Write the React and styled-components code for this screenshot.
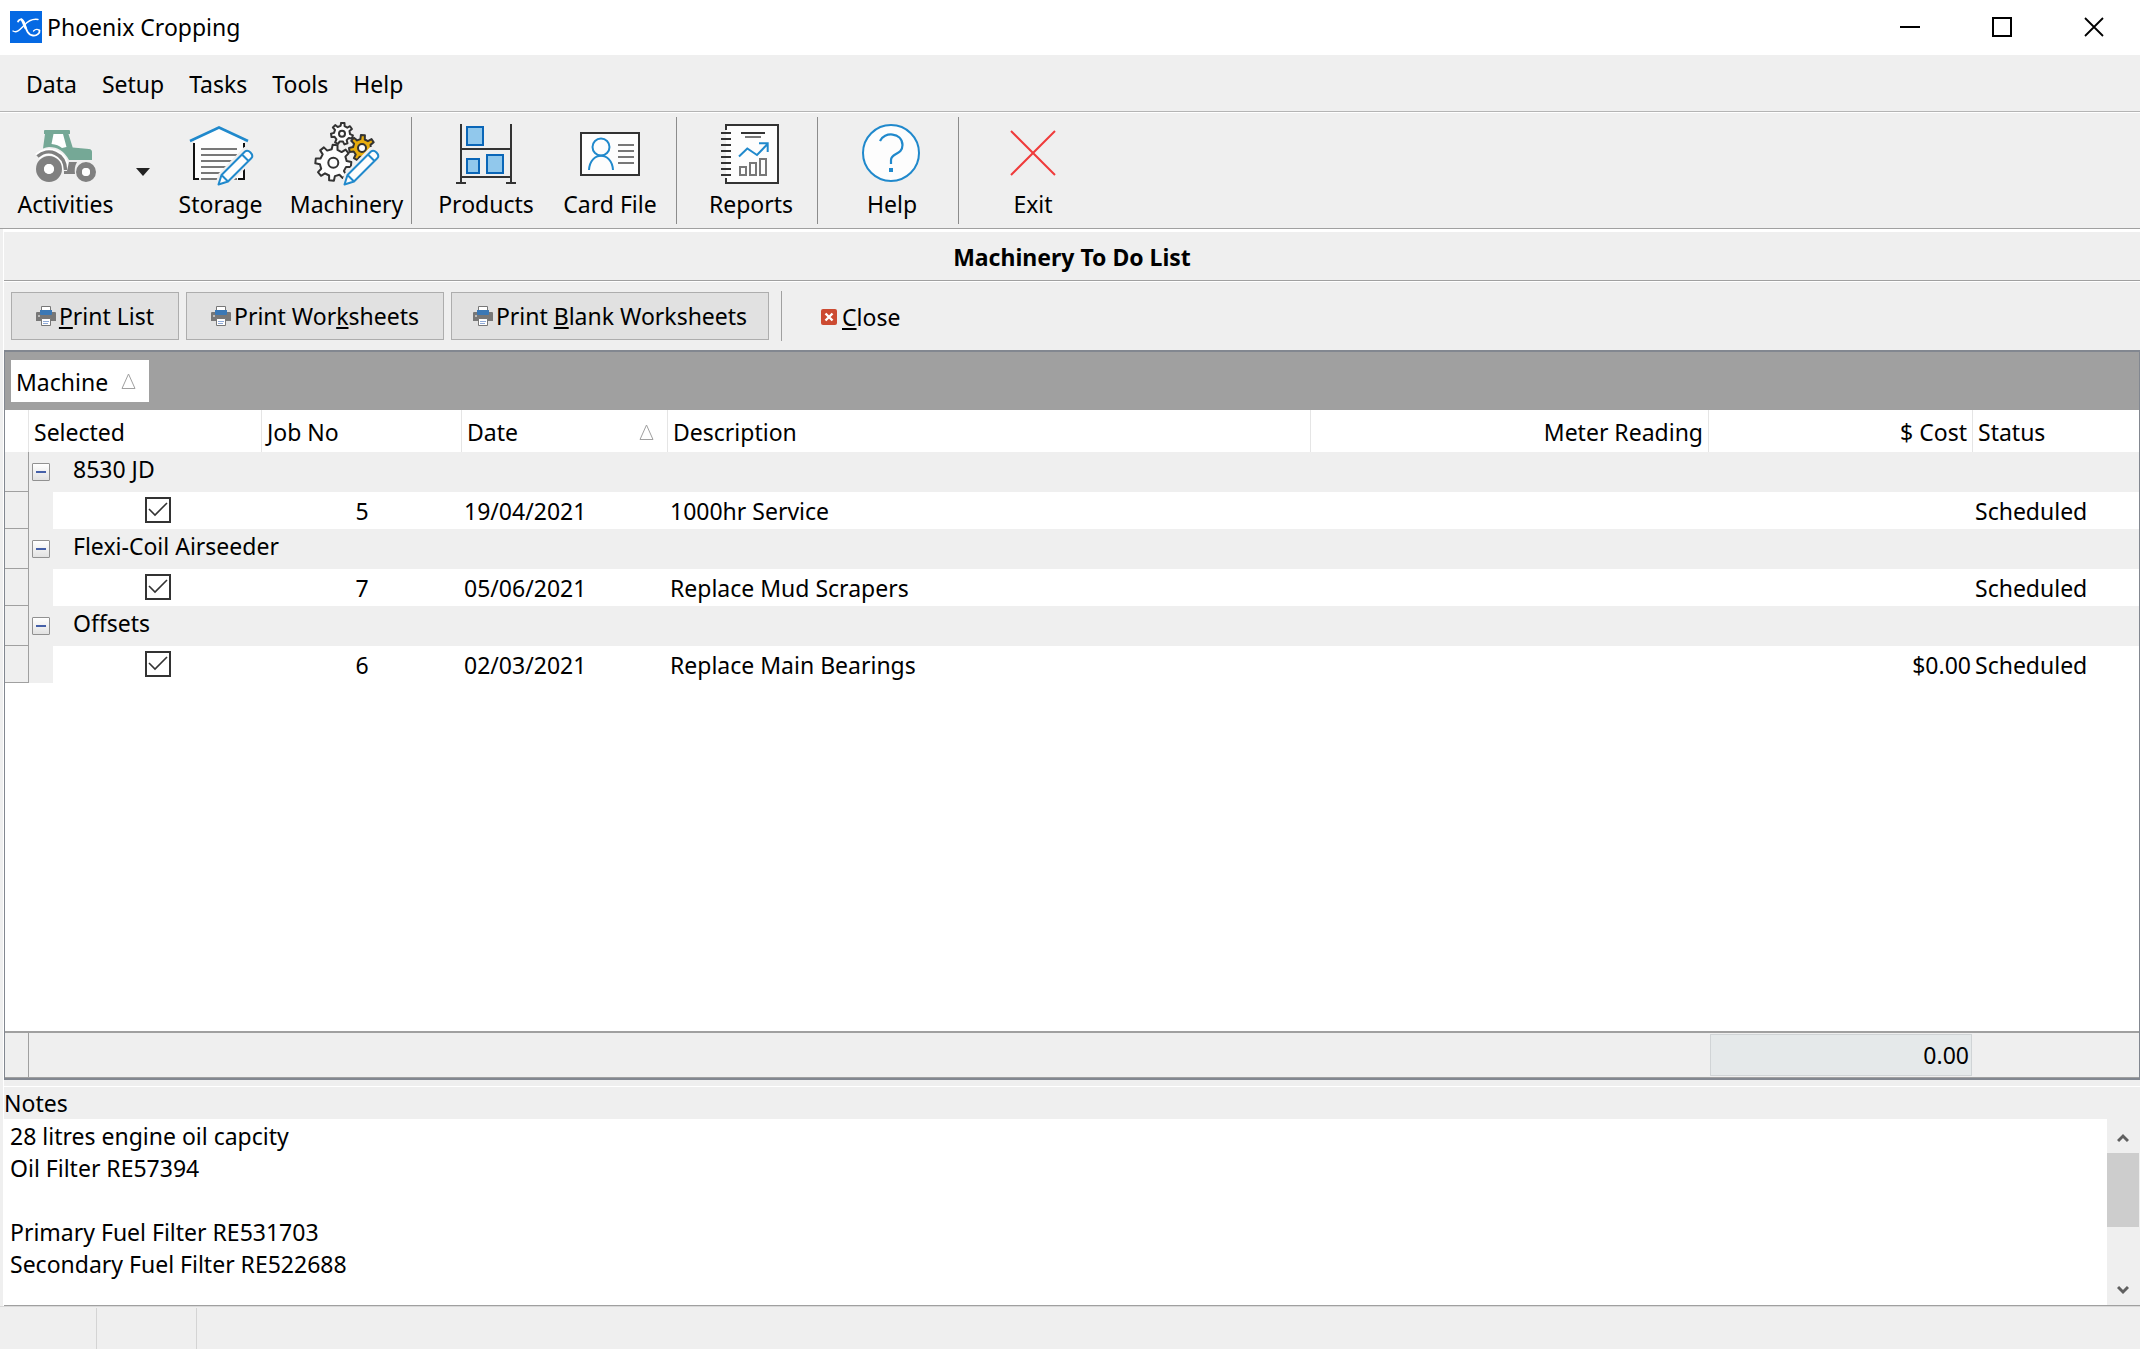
import React, { useState } from "react";
import styled, { createGlobalStyle } from "styled-components";

const GlobalStyle = createGlobalStyle`
  * {
    box-sizing: border-box;
  }
  body {
    margin: 0;
    background: #efefef;
  }
  body, button, input, textarea {
    font-family: "Noto Sans", "Open Sans", sans-serif;
    font-size: 23px;
    line-height: 32px;
    color: #000;
  }
  button {
    border: 0;
    padding: 0;
    background: none;
  }
  svg {
    display: block;
    flex: none;
  }
`;

const Window = styled.div`
  display: flex;
  flex-direction: column;
  min-height: 100vh;
`;

const TitleBar = styled.header`
  display: flex;
  align-items: center;
  gap: 5px;
  height: 55px;
  padding: 0 0 2px 10px;
  background: #fff;
`;

const AppName = styled.span`
  flex: 1;
`;

const WindowButtons = styled.div`
  display: flex;
  align-self: stretch;
`;

const WindowButton = styled.button`
  display: flex;
  align-items: center;
  justify-content: center;
  width: 92px;
`;

const MenuBar = styled.nav`
  display: flex;
  align-items: center;
  gap: 25px;
  height: 57px;
  padding: 2px 0 0 26px;
  border-bottom: 1px solid #b4b4b4;
`;

const ToolBar = styled.div`
  display: flex;
  height: 117px;
  padding-top: 4px;
  border-top: 1px solid #fff;
  border-bottom: 1px solid #a0a0a0;
`;

const ToolButton = styled.button`
  display: flex;
  flex-direction: column;
  align-items: center;
  width: ${(props) => props.$width || 124}px;
  padding-top: 5px;
`;

const DropButton = styled.button`
  display: flex;
  align-items: center;
  justify-content: center;
  width: 24px;
  padding-bottom: 2px;
`;

const ToolSeparator = styled.div`
  width: 1px;
  height: 107px;
  margin: 0 12px 0 4px;
  background: #8c8c8c;
`;

const Workspace = styled.main`
  flex: 1;
  display: flex;
  flex-direction: column;
  margin-left: 3px;
  border-top: 3px solid #fff;
  border-left: 1px solid #fff;
`;

const PageTitle = styled.h1`
  margin: 0;
  height: 49px;
  padding-top: 9px;
  border-bottom: 1px solid #a0a0a0;
  font-size: 23px;
  font-weight: 700;
  text-align: center;
`;

const ActionBar = styled.div`
  display: flex;
  align-items: center;
  height: 69px;
  padding: 0 7px;
  border-top: 1px solid #fff;
`;

const ActionButton = styled.button`
  display: flex;
  align-items: center;
  justify-content: center;
  gap: 3px;
  width: ${(props) => props.$width}px;
  height: 48px;
  margin-right: 7px;
  border: 1px solid #adadad;
  background: #e1e1e1;
  white-space: nowrap;
`;

const ActionSeparator = styled.div`
  width: 1px;
  height: 50px;
  margin: 0 39px 0 5px;
  background: #a0a0a0;
`;

const CloseButton = styled.button`
  display: flex;
  align-items: center;
  gap: 5px;
  padding-top: 1px;
`;

const Grid = styled.section`
  flex: 1;
  display: flex;
  flex-direction: column;
  border: 1px solid #828790;
  border-top: 2px solid #828790;
  border-bottom: 2px solid #828790;
  background: #fff;
`;

const GroupPanel = styled.div`
  display: flex;
  align-items: center;
  height: 58px;
  padding-left: 6px;
  background: #a0a0a0;
`;

const GroupChip = styled.button`
  display: flex;
  align-items: center;
  justify-content: space-between;
  width: 138px;
  height: 42px;
  padding: 1px 13px 0 5px;
  background: #fff;
`;

const Table = styled.table`
  width: 100%;
  table-layout: fixed;
  border-collapse: separate;
  border-spacing: 0;
`;

const HeadCell = styled.th`
  height: 42px;
  padding: 2px 5px 0;
  border-right: 1px solid #e5e5e5;
  font-weight: 400;
  text-align: ${(props) => props.$align || "left"};
  white-space: nowrap;
  &:last-child {
    border-right: 0;
  }
`;

const HeadContent = styled.span`
  display: flex;
  align-items: center;
  justify-content: space-between;
  padding-right: 8px;
`;

const Indicator = styled.td`
  padding: 0;
  border-right: 1px solid #a0a0a0;
  border-bottom: 1px solid #a0a0a0;
  background: #efefef;
`;

const GroupCell = styled.td`
  height: 40px;
  padding: 0 0 6px 3px;
  background: #efefef;
`;

const GroupContent = styled.div`
  display: flex;
  align-items: center;
  gap: 23px;
`;

const Toggle = styled.button`
  display: flex;
  align-items: center;
  justify-content: center;
  width: 18px;
  height: 18px;
  margin-top: 6px;
  border: 1px solid #919191;
  border-radius: 1px;
  background: linear-gradient(#fff, #e2e2e2);
`;

const CheckCell = styled.td`
  padding: 0;
  border-left: 24px solid #efefef;
`;

const CheckBox = styled.input`
  appearance: none;
  display: block;
  width: 26px;
  height: 26px;
  margin: 0 auto 2px;
  border: 2px solid #333;
  background: #fff;
  &:checked {
    background: #fff
      url("data:image/svg+xml,%3Csvg xmlns='http://www.w3.org/2000/svg' viewBox='0 0 22 22'%3E%3Cpath d='M2 10l6 6L20 4' fill='none' stroke='%23333' stroke-width='1.6'/%3E%3C/svg%3E");
  }
`;

const Cell = styled.td`
  height: 37px;
  padding: 1px 2px 0;
  line-height: 34px;
  text-align: ${(props) => props.$align || "left"};
  white-space: nowrap;
`;

const Summary = styled.div`
  display: flex;
  height: 47px;
  margin-top: auto;
  border-top: 2px solid #a0a0a0;
  border-bottom: 1px solid #a0a0a0;
  background: #efefef;
`;

const SummaryIndicator = styled.div`
  width: 24px;
  border-right: 1px solid #a0a0a0;
`;

const SummaryTotal = styled.output`
  width: 262px;
  margin: 1px 167px 1px auto;
  padding: 4px 2px;
  border: 1px solid #d0d4d6;
  background: #e5e9ea;
  text-align: right;
`;

const NotesLabel = styled.label`
  height: 33px;
  margin-top: 6px;
  border-top: 1px solid #fff;
`;

const NotesBox = styled.div`
  display: flex;
  height: 187px;
  border-bottom: 1px solid #a0a0a0;
`;

const NotesText = styled.textarea`
  flex: 1;
  padding: 1px 6px;
  border: 0;
  outline: 0;
  resize: none;
  overflow: hidden;
  background: #fff;
`;

const ScrollBar = styled.div`
  display: flex;
  flex-direction: column;
  width: 33px;
  padding-right: 1px;
`;

const ScrollButton = styled.button`
  display: flex;
  align-items: center;
  justify-content: center;
  height: 34px;
  padding-top: 3px;
`;

const ScrollTrack = styled.div`
  flex: 1;
`;

const ScrollThumb = styled.div`
  height: 74px;
  background: #cdcdcd;
`;

const StatusBar = styled.footer`
  display: flex;
  height: 43px;
  padding-top: 1px;
  border-top: 1px solid #d9d9d9;
`;

const StatusPanel = styled.div`
  width: ${(props) => props.$width}px;
  border-right: 1px solid #d4d4d4;
`;

const ToolIcon = ({ children }) => (
  <svg width="66" height="66" viewBox="0 0 66 66" fill="none" aria-hidden="true">
    {children}
  </svg>
);

// outline of a cog wheel
const gearPath = (cx, cy, outer, inner, teeth, turn = 0) => {
  const step = (Math.PI * 2) / teeth;
  const points = [];
  for (let i = 0; i < teeth; i++) {
    const a = i * step + turn;
    [
      [inner, -0.28],
      [outer, -0.17],
      [outer, 0.17],
      [inner, 0.28],
    ].forEach(([r, k]) => {
      const x = cx + r * Math.cos(a + k * step);
      const y = cy + r * Math.sin(a + k * step);
      points.push(`${x.toFixed(1)} ${y.toFixed(1)}`);
    });
  }
  return `M${points.join("L")}Z`;
};

const Pencil = () => (
  <>
    <path d="M29 65L32 53L57 27Q61 26 65 32V36L40 61Z" fill="#efefef" stroke="#efefef" strokeWidth="4" />
    <path
      d="M30.5 62.5L33.5 53L57 29.5Q59.5 27.5 62.5 30.5T63.5 36L40 59.5ZM54 32.5L60.5 39M33.5 53L40 59.5"
      fill="#fdfdfd"
      stroke="#2089cc"
      strokeWidth="2"
      strokeLinejoin="round"
    />
  </>
);

const TractorIcon = () => (
  <ToolIcon>
    <path
      fillRule="evenodd"
      fill="#75a896"
      d="M12 8H36Q37 8 37 9V12H35.5L39.7 25.5L56 27Q59 27.3 59 30V38H36Q29 25 16 25Q13 25 10 26.5L12 12H11V9Q11 8 12 8Z"
    />
    <path d="M20.5 12H30L33.5 25L29 26Q25 22.5 18.5 22Z" fill="#fff" />
    <path d="M4.5 34.5C15 25 32 31 32.5 48" stroke="#fff" strokeWidth="7" />
    <path d="M4.5 34.5C15 25 32 31 32.5 48" stroke="#808080" strokeWidth="3.5" />
    <path d="M36 40H44Q41 45 42 52H31V49H34Z" fill="#808080" />
    <circle cx="16" cy="47" r="9" stroke="#808080" strokeWidth="8" />
    <circle cx="16" cy="47" r="5" fill="#fff" />
    <circle cx="53" cy="50" r="7" stroke="#808080" strokeWidth="6" />
    <circle cx="53" cy="50" r="4" fill="#fff" />
  </ToolIcon>
);

const StorageIcon = () => (
  <ToolIcon>
    <path d="M6 17L31 5L56 17V57H6Z" fill="#fdfdfd" />
    <path d="M11 57H6V21M56 21V57H50" stroke="#111" strokeWidth="2" />
    <path d="M2 19L31 5.5L60 19" stroke="#2089cc" strokeWidth="2.5" />
    <path d="M13 27H49M13 33H49M13 39H49M13 45H49M13 51H49M13 57H49" stroke="#777" strokeWidth="2" />
    <Pencil />
  </ToolIcon>
);

const MachineryIcon = () => (
  <ToolIcon>
    <g stroke="#333" strokeWidth="2" strokeLinejoin="round" fill="#fdfdfd">
      <path d={gearPath(28, 11.7, 11, 8, 7, 0.3)} />
      <circle cx="28" cy="11.7" r="3" />
      <path d={gearPath(48, 26, 13, 9, 7, -1.5)} fill="#e8ad0c" />
      <circle cx="48" cy="26" r="4" />
      <path d={gearPath(19.3, 40.7, 18, 13.5, 8, 0.1)} />
      <circle cx="19.3" cy="40.7" r="5" />
    </g>
    <Pencil />
  </ToolIcon>
);

const ProductsIcon = () => (
  <ToolIcon>
    <path d="M8 2V61M58 2V61M8 27H58M8 55H58M3 61H13M53 61H63" stroke="#333" strokeWidth="2" />
    <g fill="#91c8ec" stroke="#0a66b8" strokeWidth="2">
      <rect x="14" y="5" width="16" height="18" />
      <rect x="14" y="37" width="12" height="14" />
      <rect x="34" y="33" width="16" height="18" />
    </g>
  </ToolIcon>
);

const CardIcon = () => (
  <ToolIcon>
    <rect x="4" y="11" width="58" height="42" fill="#fdfdfd" stroke="#333" strokeWidth="2" />
    <circle cx="24" cy="25" r="8.5" stroke="#2089cc" strokeWidth="2" />
    <path d="M12 48C13 29 35 29 36 48" stroke="#2089cc" strokeWidth="2" />
    <path d="M41 23H57M41 29H57M41 35H57M41 41H57" stroke="#777" strokeWidth="2" />
  </ToolIcon>
);

const ReportsIcon = () => (
  <ToolIcon>
    <path d="M8 3H60V61H8Z" fill="#fdfdfd" />
    <path d="M8 8V3H60V61H8V56" stroke="#333" strokeWidth="2" />
    <path
      d="M3 11H13M3 17H13M3 23H13M3 29H13M3 35H13M3 41H13M3 47H13M3 53H13M23 11H47"
      stroke="#333"
      strokeWidth="2"
    />
    <path d="M27 15H43M22 45H28V53H22ZM32 41H38V53H32ZM42 37H48V53H42Z" stroke="#777" strokeWidth="2" />
    <path d="M21 34.5L29.3 26.5L39 33L50 21.5M41 21.3H49.7V30" stroke="#2089cc" strokeWidth="2" />
  </ToolIcon>
);

const HelpIcon = () => (
  <ToolIcon>
    <circle cx="32" cy="31" r="28" fill="#fdfdfd" stroke="#2089cc" strokeWidth="2" />
    <path
      d="M21 19C25 9.5 43 10 43.5 23C43.5 33 32 31 32 38V42"
      stroke="#2089cc"
      strokeWidth="2.2"
    />
    <rect x="30" y="46" width="4" height="4" fill="#2089cc" />
  </ToolIcon>
);

const ExitIcon = () => (
  <ToolIcon>
    <path d="M11 9L55 53M55 9L11 53" stroke="#ef3b3b" strokeWidth="2" />
  </ToolIcon>
);

const PrinterIcon = () => (
  <svg width="20" height="20" viewBox="0 0 20 20" aria-hidden="true">
    <path d="M1 6H19Q20 6 20 7V15H0V7Q0 6 1 6Z" fill="#777" />
    <path d="M5.5 .5H14.5V6H5.5Z" fill="#fff" stroke="#777" />
    <path d="M4 4H16V8Q16 9 15 9H5Q4 9 4 8Z" fill="#3b78b5" />
    <path d="M5.5 12.5H14.5V19.5H5.5Z" fill="#fff" stroke="#777" />
    <path d="M7 15.5H13M7 17.5H12" stroke="#8ea9d6" />
    <path d="M2 10H4" stroke="#fff" />
  </svg>
);

const CloseIcon = () => (
  <svg width="16" height="16" viewBox="0 0 16 16" aria-hidden="true">
    <rect width="16" height="16" rx="2" fill="#cc4a31" />
    <path d="M4.5 4.5L11.5 11.5M11.5 4.5L4.5 11.5" stroke="#fff" strokeWidth="2.4" />
  </svg>
);

const SortIcon = () => (
  <svg width="15" height="17" viewBox="0 0 15 17" fill="none" aria-hidden="true">
    <path d="M7.5 1L14 15.5H1Z" stroke="#a0a0a0" />
  </svg>
);

const LogoIcon = () => (
  <svg width="32" height="32" viewBox="0 0 32 32" fill="none" aria-hidden="true">
    <rect width="32" height="32" fill="#0569e3" />
    <g stroke="#fff" strokeLinecap="round">
      <path d="M8 10.5C9.5 7.500 12.500 7.500 14 11C16 17 17 24 23 24.500C27 25 30 22 29.500 19.500" strokeWidth="1.8" />
      <path d="M3 20C7 22.500 10.500 18 14 14.500C18 10 22 7.500 28 8.500" strokeWidth="1.4" />
      <path d="M11.5 8.500C13 10 14 14 15.500 17" strokeWidth="2.4" />
      <path d="M29.500 19.500C27 17.500 25 18.500 23.500 20" strokeWidth="1.3" />
    </g>
  </svg>
);

const columns = [
  { title: "Selected", width: 233 },
  { title: "Job No", width: 200 },
  { title: "Date", width: 206, sorted: true },
  { title: "Description" },
  { title: "Meter Reading", width: 398, align: "right" },
  { title: "$ Cost", width: 264, align: "right" },
  { title: "Status", width: 166 },
];

const machines = [
  {
    name: "8530 JD",
    jobs: [{ no: 5, date: "19/04/2021", desc: "1000hr Service", status: "Scheduled" }],
  },
  {
    name: "Flexi-Coil Airseeder",
    jobs: [{ no: 7, date: "05/06/2021", desc: "Replace Mud Scrapers", status: "Scheduled" }],
  },
  {
    name: "Offsets",
    jobs: [
      { no: 6, date: "02/03/2021", desc: "Replace Main Bearings", cost: "$0.00", status: "Scheduled" },
    ],
  },
];

const defaultNotes = `28 litres engine oil capcity
Oil Filter RE57394

Primary Fuel Filter RE531703
Secondary Fuel Filter RE522688`;

const App = () => {
  const [closed, setClosed] = useState({});
  const [notes, setNotes] = useState(defaultNotes);

  const toggleGroup = (name) => {
    setClosed((prev) => ({ ...prev, [name]: !prev[name] }));
  };

  return (
    <Window>
      <GlobalStyle />
      <TitleBar>
        <LogoIcon />
        <AppName>Phoenix Cropping</AppName>
        <WindowButtons>
          <WindowButton aria-label="Minimize">
            <svg width="20" height="20" viewBox="0 0 20 20">
              <path d="M0 10H20" stroke="#000" strokeWidth="2" />
            </svg>
          </WindowButton>
          <WindowButton aria-label="Maximize">
            <svg width="20" height="20" viewBox="0 0 20 20" fill="none">
              <path d="M1 1H19V19H1Z" stroke="#000" strokeWidth="2" />
            </svg>
          </WindowButton>
          <WindowButton aria-label="Close window">
            <svg width="20" height="20" viewBox="0 0 20 20">
              <path d="M1 1L19 19M19 1L1 19" stroke="#000" strokeWidth="1.8" />
            </svg>
          </WindowButton>
        </WindowButtons>
      </TitleBar>

      <MenuBar>
        {["Data", "Setup", "Tasks", "Tools", "Help"].map((item) => (
          <button key={item}>{item}</button>
        ))}
      </MenuBar>

      <ToolBar>
        <ToolButton $width={131}>
          <TractorIcon />
          Activities
        </ToolButton>
        <DropButton aria-label="More activities">
          <svg width="14" height="8" viewBox="0 0 14 8">
            <path d="M0 0H14L7 8Z" fill="#222" />
          </svg>
        </DropButton>
        <ToolButton $width={131}>
          <StorageIcon />
          Storage
        </ToolButton>
        <ToolButton $width={121}>
          <MachineryIcon />
          Machinery
        </ToolButton>
        <ToolSeparator />
        <ToolButton>
          <ProductsIcon />
          Products
        </ToolButton>
        <ToolButton>
          <CardIcon />
          Card File
        </ToolButton>
        <ToolSeparator />
        <ToolButton>
          <ReportsIcon />
          Reports
        </ToolButton>
        <ToolSeparator />
        <ToolButton>
          <HelpIcon />
          Help
        </ToolButton>
        <ToolSeparator />
        <ToolButton>
          <ExitIcon />
          Exit
        </ToolButton>
      </ToolBar>

      <Workspace>
        <PageTitle>Machinery To Do List</PageTitle>
        <ActionBar>
          <ActionButton $width={168}>
            <PrinterIcon />
            <span>
              <u>P</u>rint List
            </span>
          </ActionButton>
          <ActionButton $width={258}>
            <PrinterIcon />
            <span>
              Print Wor<u>k</u>sheets
            </span>
          </ActionButton>
          <ActionButton $width={318}>
            <PrinterIcon />
            <span>
              Print <u>B</u>lank Worksheets
            </span>
          </ActionButton>
          <ActionSeparator />
          <CloseButton>
            <CloseIcon />
            <span>
              <u>C</u>lose
            </span>
          </CloseButton>
        </ActionBar>

        <Grid>
          <GroupPanel>
            <GroupChip>
              Machine
              <SortIcon />
            </GroupChip>
          </GroupPanel>
          <Table>
            <colgroup>
              <col width="24" />
              {columns.map((col) => (
                <col key={col.title} width={col.width} />
              ))}
            </colgroup>
            <thead>
              <tr>
                <HeadCell aria-label="Row indicator" />
                {columns.map((col) => (
                  <HeadCell key={col.title} $align={col.align}>
                    {col.sorted ? (
                      <HeadContent>
                        {col.title}
                        <SortIcon />
                      </HeadContent>
                    ) : (
                      col.title
                    )}
                  </HeadCell>
                ))}
              </tr>
            </thead>
            {machines.map((machine) => (
              <tbody key={machine.name}>
                <tr>
                  <Indicator />
                  <GroupCell colSpan={7}>
                    <GroupContent>
                      <Toggle
                        aria-label={`Toggle ${machine.name}`}
                        onClick={() => toggleGroup(machine.name)}
                      >
                        <svg width="10" height="10" viewBox="0 0 10 10">
                          <path d={closed[machine.name] ? "M0 5H10M5 0V10" : "M0 5H10"} stroke="#4560a8" strokeWidth="2" />
                        </svg>
                      </Toggle>
                      {machine.name}
                    </GroupContent>
                  </GroupCell>
                </tr>
                {!closed[machine.name] &&
                  machine.jobs.map((job) => (
                    <tr key={job.no}>
                      <Indicator />
                      <CheckCell>
                        <CheckBox type="checkbox" defaultChecked aria-label={`Select job ${job.no}`} />
                      </CheckCell>
                      <Cell $align="center">{job.no}</Cell>
                      <Cell>{job.date}</Cell>
                      <Cell>{job.desc}</Cell>
                      <Cell />
                      <Cell $align="right">{job.cost}</Cell>
                      <Cell>{job.status}</Cell>
                    </tr>
                  ))}
              </tbody>
            ))}
          </Table>
          <Summary>
            <SummaryIndicator />
            <SummaryTotal>0.00</SummaryTotal>
          </Summary>
        </Grid>

        <NotesLabel htmlFor="notes">Notes</NotesLabel>
        <NotesBox>
          <NotesText id="notes" value={notes} onChange={(e) => setNotes(e.target.value)} />
          <ScrollBar>
            <ScrollButton aria-label="Scroll up">
              <svg width="12" height="10" viewBox="0 0 12 10" fill="none">
                <path d="M1 8L6 3L11 8" stroke="#606060" strokeWidth="3" />
              </svg>
            </ScrollButton>
            <ScrollTrack>
              <ScrollThumb />
            </ScrollTrack>
            <ScrollButton aria-label="Scroll down">
              <svg width="12" height="10" viewBox="0 0 12 10" fill="none">
                <path d="M1 2L6 7L11 2" stroke="#606060" strokeWidth="3" />
              </svg>
            </ScrollButton>
          </ScrollBar>
        </NotesBox>
      </Workspace>

      <StatusBar>
        <StatusPanel $width={97} />
        <StatusPanel $width={100} />
      </StatusBar>
    </Window>
  );
};

export default App;
